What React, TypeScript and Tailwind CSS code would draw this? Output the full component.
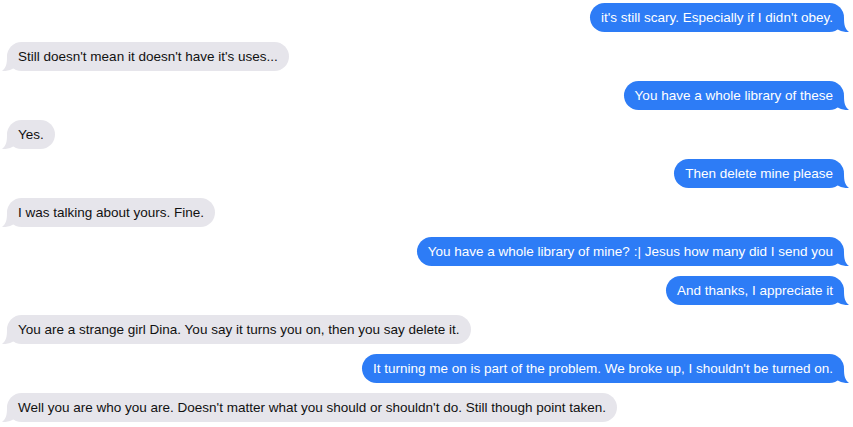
const messages: { me: boolean; text: string }[] = [
  { me: true, text: "it's still scary. Especially if I didn't obey." },
  { me: false, text: "Still doesn't mean it doesn't have it's uses..." },
  { me: true, text: "You have a whole library of these" },
  { me: false, text: "Yes." },
  { me: true, text: "Then delete mine please" },
  { me: false, text: "I was talking about yours. Fine." },
  { me: true, text: "You have a whole library of mine? :| Jesus how many did I send you" },
  { me: true, text: "And thanks, I appreciate it" },
  { me: false, text: "You are a strange girl Dina. You say it turns you on, then you say delete it." },
  { me: true, text: "It turning me on is part of the problem. We broke up, I shouldn't be turned on." },
  { me: false, text: "Well you are who you are. Doesn't matter what you should or shouldn't do. Still though point taken." },
];

const Bubble = ({ me, text }: { me: boolean; text: string }) => {
  return (
    <div className={me ? "flex justify-end" : "flex justify-start"}>
      <div
        className={
          me
            ? "relative rounded-[15px] bg-[#2d7cf6] text-white px-[11px] py-[6px] text-[13.5px] leading-[17px] whitespace-nowrap"
            : "relative rounded-[15px] bg-[#e6e5eb] text-[#111] px-[11px] py-[6px] text-[13.5px] leading-[17px] whitespace-nowrap"
        }
      >
        {/* tail */}
        {me ? (
          <svg className="absolute -right-[5px] bottom-0" width="12" height="14" viewBox="0 0 12 14">
            <path d="M0 0 L7 0 C7 7 8 11 12 14 C8 14.5 3 13 0 11 Z" fill="#2d7cf6" />
          </svg>
        ) : (
          <svg className="absolute -left-[5px] bottom-0" width="12" height="14" viewBox="0 0 12 14">
            <path d="M12 0 L5 0 C5 7 4 11 0 14 C4 14.5 9 13 12 11 Z" fill="#e6e5eb" />
          </svg>
        )}
        <span className="relative">{text}</span>
      </div>
    </div>
  );
};

export default function App() {
  return (
    <div
      className="w-[853px] h-[427px] bg-white overflow-hidden flex flex-col gap-[10px] pt-[3px] pl-[7px] pr-[9px]"
      style={{ fontFamily: '"Liberation Sans", Arial, sans-serif' }}
    >
      {messages.map((m, i) => (
        <Bubble key={i} me={m.me} text={m.text} />
      ))}
    </div>
  );
}
